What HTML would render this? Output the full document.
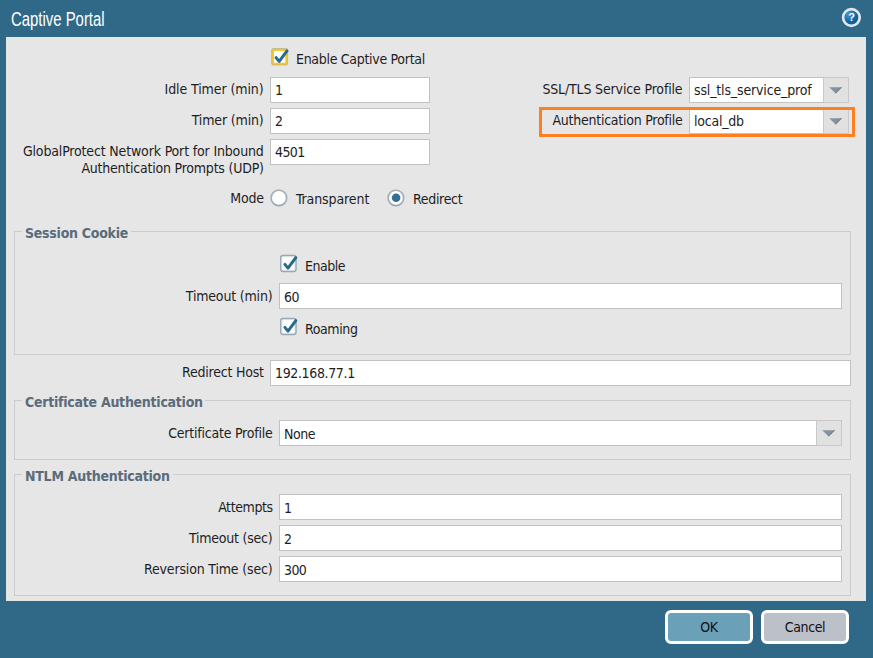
<!DOCTYPE html>
<html>
<head>
<meta charset="utf-8">
<title>Captive Portal</title>
<style>
html,body{margin:0;padding:0;}
body{width:873px;height:658px;overflow:hidden;background:#2f6987;position:relative;
  font-family:"DejaVu Sans Condensed","Liberation Sans",sans-serif;font-size:14px;color:#1e1e1e;letter-spacing:-0.22px;}
*{box-sizing:border-box;}
.abs{position:absolute;}
#title{left:10.5px;top:7px;color:#fff;font-family:"Liberation Sans",sans-serif;font-size:20px;line-height:24px;white-space:nowrap;letter-spacing:0;transform-origin:0 0;transform:scaleX(0.745);}
#panel{left:6px;top:37px;width:860px;height:564px;background:#e6e6e6;}
.lbl{position:absolute;left:0;white-space:nowrap;text-align:right;line-height:17px;height:17px;}
.txt{position:absolute;white-space:nowrap;line-height:17px;height:17px;}
.inp{position:absolute;height:26px;background:#fff;border:1px solid #c1c3c3;padding:0 0 0 4px;line-height:25px;white-space:nowrap;overflow:hidden;}
.fs{position:absolute;border:1px solid #cccccc;}
.lg{position:absolute;background:#e6e6e6;color:#5a6b7b;font-weight:bold;white-space:nowrap;line-height:17px;height:17px;padding:0 0 0 3px;overflow:hidden;}
.trg{position:absolute;width:26px;height:26px;border:1px solid #c9c9c9;background:#e1e1e1;}
.trg svg{position:absolute;left:5px;top:9px;}
.cb{position:absolute;width:17px;height:17px;border:1.5px solid #9aabb8;border-radius:2.5px;background:#fff;box-shadow:inset 0 0 1.5px 0.5px #c9d3db;}
.cb.f{border:1px solid #b9b9a8;box-shadow:inset 0 0 0 2px #f5c42e;}
.cb svg{position:absolute;left:-2px;top:-2px;overflow:visible;}
.cb.f svg{left:-1.5px;top:-1.5px;}
.rd{position:absolute;width:17px;height:17px;border:1.5px solid #a3afb9;border-radius:50%;background:#fff;}
.rd.on:after{content:"";position:absolute;left:3.5px;top:3.5px;width:7px;height:7px;border-radius:50%;background:#2f6987;}
.btn{position:absolute;height:34px;border:3px solid #fff;border-radius:6px;text-align:center;line-height:28px;color:#111;}
</style>
</head>
<body>
<div id="title" class="abs">Captive Portal</div>
<svg class="abs" style="left:841px;top:7px" width="21" height="21" viewBox="0 0 21 21">
  <defs><radialGradient id="hg" cx="0.35" cy="0.3" r="0.8"><stop offset="0" stop-color="#4a97cf"/><stop offset="0.6" stop-color="#0f649c"/><stop offset="1" stop-color="#0a5a90"/></radialGradient></defs>
  <circle cx="10.4" cy="10.5" r="8.3" fill="url(#hg)" stroke="#dde8f3" stroke-width="2.7"/>
  <text x="10.5" y="14.1" text-anchor="middle" font-family="Liberation Sans, sans-serif" font-weight="bold" font-size="11" fill="#f3f7fb">?</text>
</svg>
<div id="panel" class="abs"></div>

<div class="fs" style="left:14px;top:231px;width:837px;height:124px;"></div>
<div class="lg" style="left:22px;top:225px;width:109px;letter-spacing:-0.26px;">Session Cookie</div>
<div class="fs" style="left:14px;top:400px;width:837px;height:60px;"></div>
<div class="lg" style="left:22px;top:394px;width:183px;letter-spacing:-0.26px;">Certificate Authentication</div>
<div class="fs" style="left:14px;top:474px;width:837px;height:122px;"></div>
<div class="lg" style="left:22px;top:468px;width:150.5px;letter-spacing:-0.26px;">NTLM Authentication</div>
<div class="lbl" style="width:263.59px;top:81px;letter-spacing:-0.09px;">Idle Timer (min)</div>
<div class="lbl" style="width:263.65px;top:112px;letter-spacing:-0.15px;">Timer (min)</div>
<div class="lbl" style="width:263.66px;top:143px;letter-spacing:-0.16px;">GlobalProtect Network Port for Inbound</div>
<div class="lbl" style="width:263.72px;top:160px;letter-spacing:-0.22px;">Authentication Prompts (UDP)</div>
<div class="lbl" style="width:263.72px;top:190px;letter-spacing:-0.22px;">Mode</div>
<div class="lbl" style="width:682.4549999999999px;top:81px;letter-spacing:-0.155px;">SSL/TLS Service Profile</div>
<div class="lbl" style="width:682.55px;top:112px;letter-spacing:-0.25px;">Authentication Profile</div>
<div class="lbl" style="width:272.48px;top:288px;letter-spacing:-0.18px;">Timeout (min)</div>
<div class="lbl" style="width:263.72px;top:364px;letter-spacing:-0.22px;">Redirect Host</div>
<div class="lbl" style="width:272.52000000000004px;top:425px;letter-spacing:-0.22px;">Certificate Profile</div>
<div class="lbl" style="width:272.7px;top:499px;letter-spacing:-0.4px;">Attempts</div>
<div class="lbl" style="width:272.52000000000004px;top:530px;letter-spacing:-0.22px;">Timeout (sec)</div>
<div class="lbl" style="width:272.47px;top:561px;letter-spacing:-0.17px;">Reversion Time (sec)</div>
<div class="txt" style="left:296px;top:51px;letter-spacing:-0.3px;">Enable Captive Portal</div>
<div class="txt" style="left:296px;top:191px;letter-spacing:-0.1px;">Transparent</div>
<div class="txt" style="left:413px;top:191px;letter-spacing:-0.32px;">Redirect</div>
<div class="txt" style="left:305px;top:258px;letter-spacing:-0.46px;">Enable</div>
<div class="txt" style="left:305px;top:321px;letter-spacing:-0.39px;">Roaming</div>
<div class="inp" style="left:270px;top:77px;width:160px;letter-spacing:0px;line-height:25px;">1</div>
<div class="inp" style="left:270px;top:108px;width:160px;letter-spacing:0px;line-height:25px;">2</div>
<div class="inp" style="left:270px;top:139px;width:160px;letter-spacing:-0.6px;line-height:25px;">4501</div>
<div class="inp" style="left:689px;top:77px;width:135px;letter-spacing:-0.15px;line-height:25px;">ssl_tls_service_prof</div>
<div class="inp" style="left:689px;top:108px;width:135px;letter-spacing:-0.22px;line-height:25px;">local_db</div>
<div class="inp" style="left:279px;top:283px;width:563px;letter-spacing:-0.4px;line-height:27px;">60</div>
<div class="inp" style="left:270px;top:360px;width:581px;letter-spacing:-0.36px;line-height:25px;">192.168.77.1</div>
<div class="inp" style="left:279px;top:420px;width:538px;letter-spacing:-0.45px;line-height:27px;">None</div>
<div class="inp" style="left:279px;top:494px;width:563px;letter-spacing:0px;line-height:27px;">1</div>
<div class="inp" style="left:279px;top:525px;width:563px;letter-spacing:0px;line-height:27px;">2</div>
<div class="inp" style="left:279px;top:556px;width:563px;letter-spacing:-0.6px;line-height:27px;">300</div>
<div class="trg" style="left:823px;top:77px;"><svg width="14" height="8" viewBox="0 0 14 8"><path d="M0.2 0.2 L13.2 0.2 L6.7 6.6 Z" fill="#8593a0"/><path d="M13.2 0.2 L6.7 6.6 L5.9 5.8 L11.6 0.2 Z" fill="#64748294"/></svg></div>
<div class="trg" style="left:823px;top:108px;"><svg width="14" height="8" viewBox="0 0 14 8"><path d="M0.2 0.2 L13.2 0.2 L6.7 6.6 Z" fill="#8593a0"/><path d="M13.2 0.2 L6.7 6.6 L5.9 5.8 L11.6 0.2 Z" fill="#64748294"/></svg></div>
<div class="trg" style="left:816px;top:420px;"><svg width="14" height="8" viewBox="0 0 14 8"><path d="M0.2 0.2 L13.2 0.2 L6.7 6.6 Z" fill="#8593a0"/><path d="M13.2 0.2 L6.7 6.6 L5.9 5.8 L11.6 0.2 Z" fill="#64748294"/></svg></div>
<svg class="abs" style="left:270px;top:46px" width="22" height="22" viewBox="0 0 22 22"><rect x="1.60" y="2.50" width="16.00" height="16.60" rx="1.5" fill="#f6c52f" stroke="#9aa8a8" stroke-opacity="0.75" stroke-width="0.7"/><rect x="4.00" y="5.00" width="11.30" height="11.70" fill="#fff"/><path d="M6.10 11.70 L9.20 15.40 L17.00 4.90" fill="none" stroke="#276a8c" stroke-width="3" stroke-linecap="round" stroke-linejoin="round"/></svg>
<svg class="abs" style="left:279px;top:252px" width="22" height="22" viewBox="0 0 22 22"><rect x="1.85" y="3.65" width="15.10" height="15.70" rx="2" fill="#fff" stroke="#98a8b5" stroke-width="1.6"/><rect x="3.00" y="4.80" width="12.80" height="13.40" rx="1" fill="none" stroke="#dfe6eb" stroke-width="0.9"/><path d="M5.90 12.40 L9.00 16.10 L16.80 5.60" fill="none" stroke="#276a8c" stroke-width="3" stroke-linecap="round" stroke-linejoin="round"/></svg>
<svg class="abs" style="left:279px;top:315px" width="22" height="22" viewBox="0 0 22 22"><rect x="1.85" y="3.65" width="15.10" height="15.70" rx="2" fill="#fff" stroke="#98a8b5" stroke-width="1.6"/><rect x="3.00" y="4.80" width="12.80" height="13.40" rx="1" fill="none" stroke="#dfe6eb" stroke-width="0.9"/><path d="M5.90 12.40 L9.00 16.10 L16.80 5.60" fill="none" stroke="#276a8c" stroke-width="3" stroke-linecap="round" stroke-linejoin="round"/></svg>
<svg class="abs" style="left:267px;top:186px" width="22" height="22" viewBox="0 0 22 22"><defs><linearGradient id="rg267" x1="0" y1="0" x2="0" y2="1"><stop offset="0" stop-color="#a9b4bd"/><stop offset="1" stop-color="#9aa7b2"/></linearGradient></defs><circle cx="11.90" cy="11.90" r="7.75" fill="#fff" stroke="url(#rg267)" stroke-width="1.7"/></svg>
<svg class="abs" style="left:384px;top:186px" width="22" height="22" viewBox="0 0 22 22"><defs><linearGradient id="rg384" x1="0" y1="0" x2="0" y2="1"><stop offset="0" stop-color="#a9b4bd"/><stop offset="1" stop-color="#9aa7b2"/></linearGradient></defs><circle cx="11.90" cy="11.90" r="7.75" fill="#fff" stroke="url(#rg384)" stroke-width="1.7"/><circle cx="12.10" cy="11.80" r="4.3" fill="#37708f"/></svg>
<div class="abs" style="left:539px;top:107px;width:316px;height:30px;border:3px solid #fd7f20;"></div>
<div class="btn" style="left:665px;top:610px;width:88px;background:#6aa1b9;">OK</div>
<div class="btn" style="left:761px;top:610px;width:88px;background:#bcc0c9;letter-spacing:-0.4px;">Cancel</div>
</body>
</html>
